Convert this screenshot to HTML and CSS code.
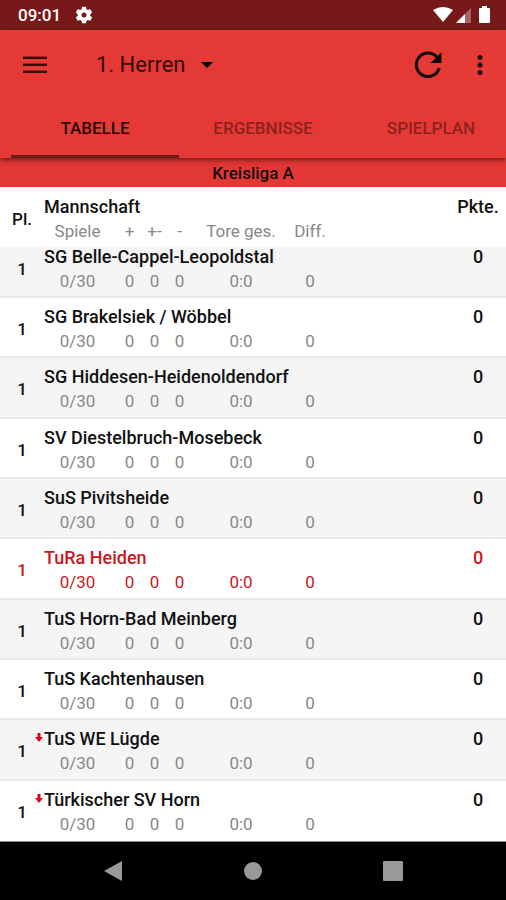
FILE: index.html
```html
<!DOCTYPE html>
<html lang="de">
<head>
<meta charset="utf-8">
<meta name="viewport" content="width=device-width, initial-scale=1">
<title>1. Herren – Tabelle</title>
<link rel="stylesheet" href="styles.css">
</head>
<body>
<div class="status">
  <span class="clock">09:01</span>
  <svg class="gear" viewBox="0 0 24 24" width="20" height="20" aria-hidden="true"><path fill="currentColor" d="M19.43 12.98c.04-.32.07-.64.07-.98s-.03-.66-.07-.98l2.11-1.65c.19-.15.24-.42.12-.64l-2-3.46c-.12-.22-.39-.3-.61-.22l-2.49 1c-.52-.4-1.08-.73-1.69-.98l-.38-2.65C14.46 2.18 14.25 2 14 2h-4c-.25 0-.46.18-.49.42l-.38 2.65c-.61.25-1.17.59-1.69.98l-2.49-1c-.23-.09-.49 0-.61.22l-2 3.46c-.13.22-.07.49.12.64l2.11 1.65c-.04.32-.07.65-.07.98s.03.66.07.98l-2.11 1.65c-.19.15-.24.42-.12.64l2 3.46c.12.22.39.3.61.22l2.49-1c.52.4 1.08.73 1.69.98l.38 2.65c.03.24.24.42.49.42h4c.25 0 .46-.18.49-.42l.38-2.65c.61-.25 1.17-.59 1.69-.98l2.49 1c.23.09.49 0 .61-.22l2-3.46c.12-.22.07-.49-.12-.64l-2.11-1.65zM12 15a3 3 0 1 1 0-6 3 3 0 0 1 0 6z"/></svg>
  <svg class="signals" viewBox="0 0 58 18" width="58" height="18" aria-hidden="true">
    <path fill="#fff" d="M0 4Q10-2 20 4L10 16Z"/>
    <path fill="#a66464" d="M38 2V17H23Z"/>
    <path fill="#fff" d="M32 8V17H23Z"/>
    <path fill="#fff" d="M49 0h5v2h2q1 0 1 1v13q0 1-1 1h-9q-1 0-1-1V3q0-1 1-1h2z"/>
  </svg>
</div>
<header class="top">
  <div class="appbar">
    <button class="icon menu" aria-label="Menü"><svg viewBox="0 0 24 18" width="24" height="18"><path fill="currentColor" d="M0 1h24v2H0zM0 8h24v2H0zM0 15h24v2H0z"/><path fill="currentColor" opacity=".4" d="M0 0h24v1H0zM0 7h24v1H0zM0 14h24v1H0z"/></svg></button>
    <button class="team">1. Herren<svg viewBox="0 0 12 6" width="12" height="6" aria-hidden="true"><path fill="#000" d="M0 0h12L6 6z"/></svg></button>
    <button class="icon" aria-label="Aktualisieren"><svg viewBox="0 0 28 28" width="28" height="28"><path fill="none" stroke="#120303" stroke-width="3" d="M25.300 17A11.700 11.700 0 1 1 22.500 5.700"/><path fill="#120303" d="M27.500 1v11H16.500z"/></svg></button>
    <button class="icon more" aria-label="Mehr"><svg viewBox="0 0 6 22" width="6" height="22"><g fill="#210505"><circle cx="3" cy="3.500" r="2.500"/><circle cx="3" cy="11" r="2.500"/><circle cx="3" cy="18.500" r="2.500"/></g></svg></button>
  </div>
  <nav class="tabs">
    <a class="active" href="#tabelle">TABELLE</a>
    <a href="#ergebnisse">ERGEBNISSE</a>
    <a href="#spielplan">SPIELPLAN</a>
  </nav>
</header>
<main id="tabelle">
  <h1>Kreisliga A</h1>
  <table>
    <thead>
      <tr><th class="pl">Pl.</th><th class="name">Mannschaft</th><th class="sp">Spiele</th><th>+</th><th>+-</th><th>-</th><th>Tore ges.</th><th>Diff.</th><th class="pts">Pkte.</th></tr>
    </thead>
    <tbody>
      <tr><td class="pl">1</td><td class="name">SG Belle-Cappel-Leopoldstal</td><td class="sp">0/30</td><td>0</td><td>0</td><td>0</td><td>0:0</td><td>0</td><td class="pts">0</td></tr>
      <tr><td class="pl">1</td><td class="name">SG Brakelsiek / Wöbbel</td><td class="sp">0/30</td><td>0</td><td>0</td><td>0</td><td>0:0</td><td>0</td><td class="pts">0</td></tr>
      <tr><td class="pl">1</td><td class="name">SG Hiddesen-Heidenoldendorf</td><td class="sp">0/30</td><td>0</td><td>0</td><td>0</td><td>0:0</td><td>0</td><td class="pts">0</td></tr>
      <tr><td class="pl">1</td><td class="name">SV Diestelbruch-Mosebeck</td><td class="sp">0/30</td><td>0</td><td>0</td><td>0</td><td>0:0</td><td>0</td><td class="pts">0</td></tr>
      <tr><td class="pl">1</td><td class="name">SuS Pivitsheide</td><td class="sp">0/30</td><td>0</td><td>0</td><td>0</td><td>0:0</td><td>0</td><td class="pts">0</td></tr>
      <tr class="own"><td class="pl">1</td><td class="name">TuRa Heiden</td><td class="sp">0/30</td><td>0</td><td>0</td><td>0</td><td>0:0</td><td>0</td><td class="pts">0</td></tr>
      <tr><td class="pl">1</td><td class="name">TuS Horn-Bad Meinberg</td><td class="sp">0/30</td><td>0</td><td>0</td><td>0</td><td>0:0</td><td>0</td><td class="pts">0</td></tr>
      <tr><td class="pl">1</td><td class="name">TuS Kachtenhausen</td><td class="sp">0/30</td><td>0</td><td>0</td><td>0</td><td>0:0</td><td>0</td><td class="pts">0</td></tr>
      <tr><td class="pl">1</td><td class="name"><svg class="down" viewBox="0 0 10 10" width="10" height="10" aria-hidden="true"><path fill="#e2001a" d="M3.500 0h3v4H9L5 9 1 4h2.500z"/></svg>TuS WE Lügde</td><td class="sp">0/30</td><td>0</td><td>0</td><td>0</td><td>0:0</td><td>0</td><td class="pts">0</td></tr>
      <tr><td class="pl">1</td><td class="name"><svg class="down" viewBox="0 0 10 10" width="10" height="10" aria-hidden="true"><path fill="#e2001a" d="M3.500 0h3v4H9L5 9 1 4h2.500z"/></svg>Türkischer SV Horn</td><td class="sp">0/30</td><td>0</td><td>0</td><td>0</td><td>0:0</td><td>0</td><td class="pts">0</td></tr>
    </tbody>
  </table>
</main>
<footer class="sysnav">
  <button aria-label="Zurück"><svg viewBox="0 0 20 22" width="20" height="22"><path fill="#999" d="M19 1v20L1 11z"/></svg></button>
  <button aria-label="Startseite"><svg viewBox="0 0 20 20" width="20" height="20"><circle cx="10" cy="10" r="9" fill="#999"/></svg></button>
  <button aria-label="Übersicht"><svg viewBox="0 0 20 20" width="20" height="20"><rect width="20" height="20" rx="1" fill="#999"/></svg></button>
</footer>
</body>
</html>
```
FILE: styles.css
```css
* { box-sizing: border-box; }
body {
  margin: 0;
  height: 100vh;
  display: flex;
  flex-direction: column;
  overflow: hidden;
  background: #fff;
  color: #111;
  font-family: Roboto, "Liberation Sans", sans-serif;
  font-size: 17px;
  line-height: 24px;
}
button {
  border: 0;
  padding: 0;
  background: none;
  color: inherit;
  font: inherit;
}
svg { display: block; }

.status {
  height: 30px;
  flex: none;
  display: flex;
  align-items: center;
  padding: 0 15px 0 18px;
  background: #771919;
  color: #fff;
}
.clock { font-weight: 500; }
.gear { margin-left: 13px; }
.signals { margin-left: auto; }

.top {
  position: relative;
  z-index: 1;
  flex: none;
  background: #e53935;
  box-shadow: 0 2px 5px rgba(0, 0, 0, .5);
}
.appbar {
  height: 70px;
  display: flex;
  align-items: center;
  padding: 0 23px;
  color: #3a0b0b;
}
.icon { flex: none; }
.team {
  display: flex;
  align-items: center;
  gap: 15px;
  margin: 0 auto 0 49px;
  font-size: 22px;
  color: #350a0a;
}
.more { margin-left: 35px; }
.tabs {
  display: flex;
  height: 58px;
  padding-left: 11px;
  overflow: hidden;
}
.tabs a {
  flex: 0 0 168px;
  padding-top: 16px;
  border-bottom: 3px solid transparent;
  color: #8d2120;
  font-weight: 500;
  text-align: center;
  text-decoration: none;
}
.tabs .active {
  color: #2b0808;
  border-color: #701b1b;
}

main {
  flex: 1;
  min-height: 0;
  display: flex;
  flex-direction: column;
  border-bottom: 1px solid #888;
}
h1 {
  flex: none;
  margin: 0;
  height: 29px;
  padding-top: 3px;
  background: #e23734;
  font-size: 17px;
  font-weight: 500;
  text-align: center;
}
table {
  flex: 1;
  min-height: 0;
  display: flex;
  flex-direction: column;
}
thead {
  display: block;
  flex: none;
  position: relative;
  z-index: 1;
  background: #fff;
}
tbody {
  flex: 1;
  min-height: 0;
  display: grid;
  grid-template-rows: 51px repeat(9, 1fr);
}
tr {
  display: grid;
  grid-template-columns: 44px 73px 25px 25px 25px 98px 40px 1fr 56px;
  grid-template-rows: 24px 24px;
  align-content: center;
  padding-top: 4px;
  border-bottom: 2px solid #e9e9e9;
}
thead tr {
  height: 60px;
  border-bottom: 0;
}
tbody tr:first-child {
  align-content: end;
  padding: 0 0 3px;
}
tbody tr:nth-child(odd) { background: #f5f5f5; }
tbody tr:last-child { border-bottom-color: transparent; }
th, td {
  grid-row: 2;
  padding: 0;
  color: #888;
  font-weight: 400;
  text-align: center;
  white-space: nowrap;
}
.sp {
  grid-column: 2;
  padding-right: 6px;
}
.pl, .name, .pts {
  color: #111;
  font-size: 18px;
  font-weight: 500;
}
.pl {
  grid-area: 1 / 1 / 3 / 2;
  align-self: center;
  font-size: 17px;
}
.name {
  position: relative;
  grid-area: 1 / 2 / 2 / 9;
  text-align: left;
}
.pts { grid-area: 1 / 9 / 2 / 10; }
.own td { color: #c9181e; }
.down {
  position: absolute;
  right: 100%;
  top: 6px;
}

.sysnav {
  flex: none;
  height: 58px;
  display: flex;
  align-items: center;
  justify-content: center;
  gap: 120px;
  background: #000;
}
```
